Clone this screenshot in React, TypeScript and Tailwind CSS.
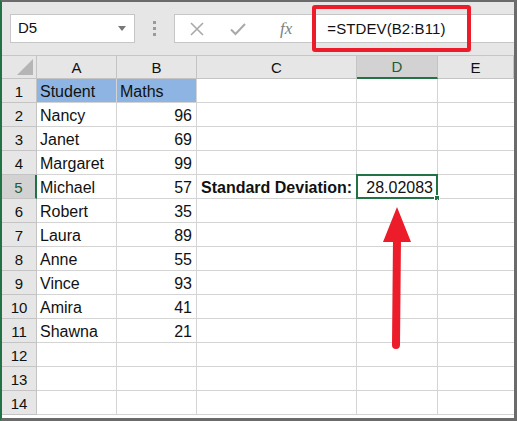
import React from "react";

const cols = ["A", "B", "C", "D", "E"];
const widths = ["w-[80px]", "w-[80px]", "w-[160px]", "w-[81px]", "w-[76px]"];

const data: [string, string][] = [
  ["Student", "Maths"],
  ["Nancy", "96"],
  ["Janet", "69"],
  ["Margaret", "99"],
  ["Michael", "57"],
  ["Robert", "35"],
  ["Laura", "89"],
  ["Anne", "55"],
  ["Vince", "93"],
  ["Amira", "41"],
  ["Shawna", "21"],
  ["", ""],
  ["", ""],
  ["", ""],
];

export default function App() {
  return (
    <div
      className="relative w-[517px] h-[421px] overflow-hidden bg-white border-t-2 border-t-[#6b6b6b] border-l-2 border-l-[#217346] border-r-[3px] border-r-[#6b6b6b] border-b-[3px] border-b-[#6b6b6b] text-[#111]"
      style={{ fontFamily: '"Liberation Sans", Arial, sans-serif' }}
    >
      {/* formula bar */}
      <div className="h-[53px] bg-[#e6e6e6] flex items-start pt-[12px] pl-[8px]">
        <div className="w-[125px] h-[29px] bg-white border border-[#c6c6c6] flex items-center justify-between pl-[7px] pr-[8px]">
          <span className="text-[15px]">D5</span>
          <span className="w-0 h-0 border-l-[4px] border-r-[4px] border-t-[5px] border-l-transparent border-r-transparent border-t-[#777]" />
        </div>
        <div className="w-[39px] h-[29px] flex flex-col items-center justify-center gap-[3px]">
          <span className="w-[3px] h-[3px] bg-[#9a9a9a]" />
          <span className="w-[3px] h-[3px] bg-[#9a9a9a]" />
          <span className="w-[3px] h-[3px] bg-[#9a9a9a]" />
        </div>
        <div className="flex-1 h-[29px] bg-white border border-r-0 border-[#c6c6c6] flex items-center">
          <svg width="14" height="14" viewBox="0 0 14 14" className="ml-[15px]">
            <path d="M1 1 L13 13 M13 1 L1 13" stroke="#a9a9a9" strokeWidth="1.6" fill="none" />
          </svg>
          <svg width="16" height="14" viewBox="0 0 16 14" className="ml-[26px]">
            <path d="M1 7.5 L5.5 12 L15 2" stroke="#a9a9a9" strokeWidth="2" fill="none" />
          </svg>
          <span
            className="ml-[34px] text-[17px] italic text-[#808080]"
            style={{ fontFamily: '"Liberation Serif", "Times New Roman", serif' }}
          >
            fx
          </span>
          <span className="ml-[35px] pt-[2px] text-[15px] tracking-[0.1px]">=STDEV(B2:B11)</span>
        </div>
      </div>

      {/* column headers */}
      <div className="flex h-[24px] border-t border-[#c6c6c6]">
        <div className="relative w-[35px] h-full bg-[#e6e6e6] border-r border-b border-[#c4c4c4]">
          <svg width="16" height="16" viewBox="0 0 16 16" className="absolute right-[3px] bottom-[3px]">
            <path d="M16 0 L16 16 L0 16 Z" fill="#b5b5b5" />
          </svg>
        </div>
        {cols.map((c, i) => (
          <div
            key={c}
            className={`${widths[i]} h-full flex items-center justify-center pt-[2px] text-[15px] border-r border-[#c4c4c4] ${
              c === "D"
                ? "bg-[#d2d2d2] text-[#1e5c3a] border-b-2 border-b-[#217346]"
                : "bg-[#e6e6e6] border-b border-b-[#c4c4c4]"
            }`}
          >
            {c}
          </div>
        ))}
      </div>

      {/* rows */}
      {data.map(([name, score], r) => {
        const row = r + 1;
        return (
          <div key={row} className="flex h-[24px]">
            <div
              className={`w-[35px] h-full flex items-center justify-center pt-[3px] text-[15px] border-b border-[#c4c4c4] ${
                row === 5
                  ? "bg-[#d2d2d2] text-[#1e5c3a] border-r-2 border-r-[#217346]"
                  : "bg-[#e6e6e6] border-r border-r-[#c4c4c4]"
              }`}
            >
              {row}
            </div>
            <div
              className={`w-[80px] h-full flex items-center pt-[3px] pl-[3px] text-[16px] border-r border-b border-[#d4d4d4] ${
                row === 1 ? "bg-[#8db4e2]" : ""
              }`}
            >
              {name}
            </div>
            <div
              className={`w-[80px] h-full flex items-center pt-[3px] text-[16px] border-r border-b border-[#d4d4d4] ${
                row === 1 ? "bg-[#8db4e2] justify-start pl-[3px]" : "justify-end pr-[4px]"
              }`}
            >
              {score}
            </div>
            <div className="w-[160px] h-full flex items-center pt-[3px] pl-[4px] text-[16px] font-bold border-r border-b border-[#d4d4d4]">
              {row === 5 ? "Standard Deviation:" : ""}
            </div>
            <div className="relative w-[81px] h-full flex items-center justify-end pt-[3px] pr-[4px] text-[16px] border-r border-b border-[#d4d4d4]">
              {row === 5 && (
                <>
                  <span className="relative z-10">28.02083</span>
                  <div className="absolute -top-px -left-px right-[-1px] bottom-[-1px] border-2 border-[#217346]" />
                  <div className="absolute right-[-3px] bottom-[-3px] w-[6px] h-[6px] bg-[#217346] border border-white" />
                </>
              )}
            </div>
            <div className="w-[76px] h-full border-b border-[#d4d4d4]" />
          </div>
        );
      })}

      {/* red highlight on formula (positions are inside the 2px top / left frame) */}
      <div className="absolute left-[310px] top-[3px] w-[159px] h-[47px] border-[4px] border-[#ec1c2a] rounded-[3px]" />

      {/* arrow */}
      <svg width="40" height="150" viewBox="0 0 40 150" className="absolute left-[374px] top-[203px]">
        <path d="M21 2 L35 37 L7 37 Z" fill="#ec1c2a" />
        <path d="M21 34 L20 140" stroke="#ec1c2a" strokeWidth="8" strokeLinecap="round" fill="none" />
      </svg>
    </div>
  );
}
